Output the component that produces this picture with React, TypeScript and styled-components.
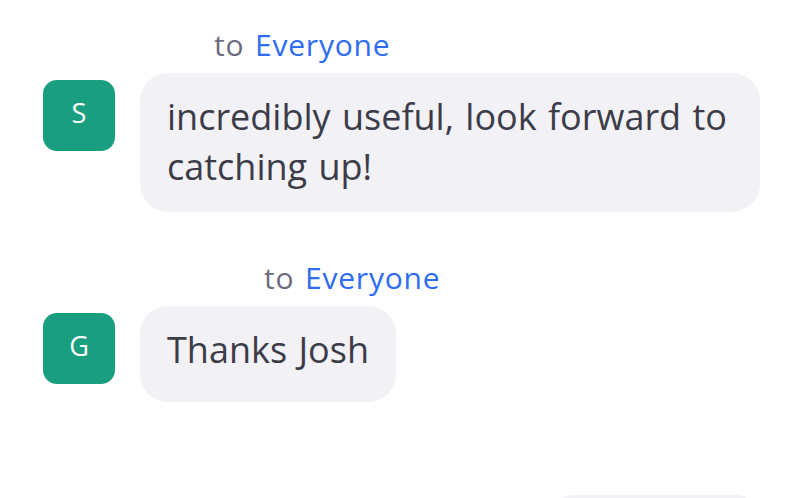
import React from 'react'
import styled, { createGlobalStyle } from 'styled-components'

const GlobalStyle = createGlobalStyle`
  html, body {
    margin: 0;
    padding: 0;
    background: #ffffff;
    overflow: hidden;
  }
  body {
    font-family: 'Open Sans', 'Noto Sans', sans-serif;
  }
`

const ChatList = styled.div`
  width: 800px;
  height: 498px;
  box-sizing: border-box;
  padding: 27px 38px 0 43px;
  display: flex;
  flex-direction: column;
  gap: 48px;
  overflow: hidden;
`

const MessageGroup = styled.div`
  display: flex;
  flex-direction: column;
  gap: 10px;
`

const ToLabel = styled.div<{ $indent: number }>`
  margin-left: ${(p) => p.$indent}px;
  font-size: 30px;
  line-height: 36px;
  letter-spacing: 0.8px;
  word-spacing: 2px;
  color: #6c6c80;

  span {
    color: #2e6cf5;
  }
`

const Row = styled.div<{ $mine?: boolean }>`
  display: flex;
  align-items: flex-start;
  justify-content: ${(p) => (p.$mine ? 'flex-end' : 'flex-start')};
  gap: 25px;
  margin-top: ${(p) => (p.$mine ? '45px' : '0')};
`

const Avatar = styled.div`
  flex: none;
  width: 72px;
  height: 71px;
  margin-top: 7px;
  border-radius: 14px;
  background: #1a9e80;
  color: #ffffff;
  font-size: 27px;
  line-height: 1;
  display: flex;
  align-items: center;
  justify-content: center;
  padding-bottom: 6px;
  box-sizing: border-box;
`

const Bubble = styled.div<{ $mine?: boolean }>`
  box-sizing: border-box;
  max-width: 620px;
  min-height: 96px;
  width: ${(p) => (p.$mine ? '215px' : 'auto')};
  padding: 19px 27px 20px;
  border-radius: 28px;
  background: #f1f1f6;
  color: #3c3c48;
  font-size: 36px;
  line-height: 50px;
  word-spacing: 2px;
  box-shadow: ${(p) => (p.$mine ? '0 1px 3px rgba(0, 0, 0, 0.06)' : 'none')};
`

const messages = [
  { initial: 'S', indent: 171, text: 'incredibly useful, look forward to catching up!' },
  { initial: 'G', indent: 221, text: 'Thanks Josh' },
]

export default function App() {
  return (
    <>
      <GlobalStyle />
      <ChatList>
        {messages.map((m) => (
          <MessageGroup key={m.initial}>
            <ToLabel $indent={m.indent}>
              to <span>Everyone</span>
            </ToLabel>
            <Row>
              <Avatar>{m.initial}</Avatar>
              <Bubble>{m.text}</Bubble>
            </Row>
          </MessageGroup>
        ))}
        {/* next message, only its top edge shows at the bottom */}
        <Row $mine>
          <Bubble $mine />
        </Row>
      </ChatList>
    </>
  )
}
